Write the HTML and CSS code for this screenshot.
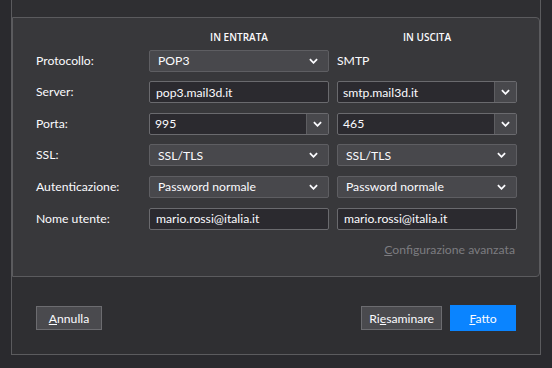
FILE: index.html
```html
<!DOCTYPE html>
<html lang="it">
<head>
    <meta charset="UTF-8">
    <title>Configurazione account</title>
    <link rel="stylesheet" href="styles.css">
</head>
<body>
    <div class="dialog">
        <div class="settings">
            <div class="grid">
                <span></span>
                <span class="col-head">IN ENTRATA</span>
                <span class="col-head">IN USCITA</span>

                <span class="label">Protocollo:</span>
                <div class="select">POP3<svg class="chev" viewBox="0 0 10 6"><path d="M1 1l4 4 4-4"/></svg></div>
                <span class="plain">SMTP</span>

                <span class="label">Server:</span>
                <div class="field">pop3.mail3d.it</div>
                <div class="combo">
                    <span class="combo-text">smtp.mail3d.it</span>
                    <span class="combo-btn"><svg class="chev" viewBox="0 0 10 6"><path d="M1 1l4 4 4-4"/></svg></span>
                </div>

                <span class="label">Porta:</span>
                <div class="combo">
                    <span class="combo-text">995</span>
                    <span class="combo-btn"><svg class="chev" viewBox="0 0 10 6"><path d="M1 1l4 4 4-4"/></svg></span>
                </div>
                <div class="combo">
                    <span class="combo-text">465</span>
                    <span class="combo-btn"><svg class="chev" viewBox="0 0 10 6"><path d="M1 1l4 4 4-4"/></svg></span>
                </div>

                <span class="label">SSL:</span>
                <div class="select">SSL/TLS<svg class="chev" viewBox="0 0 10 6"><path d="M1 1l4 4 4-4"/></svg></div>
                <div class="select">SSL/TLS<svg class="chev" viewBox="0 0 10 6"><path d="M1 1l4 4 4-4"/></svg></div>

                <span class="label">Autenticazione:</span>
                <div class="select">Password normale<svg class="chev" viewBox="0 0 10 6"><path d="M1 1l4 4 4-4"/></svg></div>
                <div class="select">Password normale<svg class="chev" viewBox="0 0 10 6"><path d="M1 1l4 4 4-4"/></svg></div>

                <span class="label">Nome utente:</span>
                <div class="field">mario.rossi@italia.it</div>
                <div class="field">mario.rossi@italia.it</div>
            </div>
            <div class="advanced"><u>C</u>onfigurazione avanzata</div>
        </div>

        <div class="actions">
            <button class="btn cancel"><u>A</u>nnulla</button>
            <span class="spacer"></span>
            <button class="btn">Ri<u>e</u>saminare</button>
            <button class="btn primary"><u>F</u>atto</button>
        </div>
    </div>
</body>
</html>
```

FILE: styles.css
```css
body {
    margin: 0;
    background-color: #2a2a2e;
    font-family: Lato, "Noto Sans", sans-serif;
    font-size: 12.2px;
    color: #fbfbfe;
}

.dialog {
    box-sizing: border-box;
    width: 530px;
    height: 355px;
    margin-left: 11px;
    padding-top: 17px;
    background-color: #2f2f32;
    border: 1px solid #5b5b5e;
    border-top: none;
}

.settings {
    box-sizing: border-box;
    width: 528px;
    height: 260px;
    padding: 12px 0 0 23px;
    background-color: #38383b;
    border: 1px solid #5b5b5e;
    border-radius: 0 4px 4px 0;
}

.grid {
    display: grid;
    grid-template-columns: 105px 180px 180px;
    column-gap: 8px;
    row-gap: 9.6px;
    align-items: center;
}

.col-head {
    text-align: center;
    font-family: "Open Sans", sans-serif;
    font-size: 10px;
    font-weight: 600;
    line-height: 14px;
    margin-bottom: -4px;
}

.label {
    line-height: 22px;
}

.plain {
    line-height: 22px;
}

.select,
.field,
.combo {
    box-sizing: border-box;
    height: 22px;
    display: flex;
    align-items: center;
}

.select {
    padding: 0 10px 0 8px;
    background-color: #48484c;
    border: 1px solid #5e5e62;
    border-radius: 2px;
    justify-content: space-between;
}

.field {
    padding: 0 6px;
    background-color: #2b2a2f;
    border: 1px solid #6a6a6e;
    border-radius: 2px;
}

.combo {
    background-color: #2b2a2f;
    border: 1px solid #6a6a6e;
    border-radius: 2px;
}

.combo-text {
    flex: 1;
    padding: 0 5px;
}

.combo-btn {
    width: 21px;
    height: 100%;
    display: flex;
    align-items: center;
    justify-content: center;
    background-color: #48484c;
    border-left: 1px solid #5e5e62;
}

.chev {
    width: 9px;
    height: 6px;
    fill: none;
    stroke: #fbfbfe;
    stroke-width: 2;
}

.advanced {
    margin: 12px 24px 0 0;
    text-align: right;
    color: #7c7c80;
}

.actions {
    display: flex;
    align-items: center;
    gap: 8px;
    padding: 28px 24px 0 24px;
}

.spacer {
    flex: 1;
}

.btn {
    height: 24px;
    padding: 0 7px;
    font-family: inherit;
    font-size: 12.2px;
    color: #fbfbfe;
    background-color: #4a4a4e;
    border: 1px solid #6c6c70;
    border-radius: 0;
}

.btn.cancel {
    width: 66px;
}

.btn.primary {
    height: 26px;
    width: 66px;
    background-color: #0a84ff;
    border-color: #0a84ff;
}
```
